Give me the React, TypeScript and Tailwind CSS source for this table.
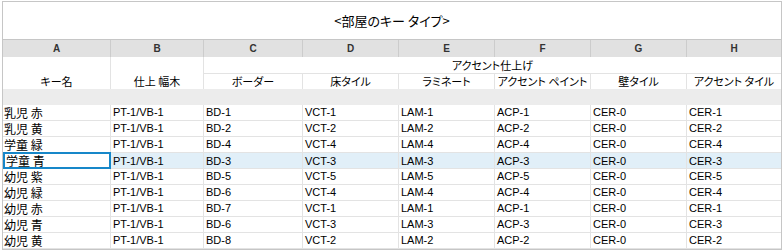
import React from "react";

const COLS = "grid grid-cols-[108px_93px_99px_96px_96px_96px_96px_94px]";
const JP = "[font-family:'Noto_Sans_CJK_JP','Noto_Sans',sans-serif]";
const LAT = "[font-family:'Liberation_Sans',Arial,sans-serif]";

const rows: string[][] = [
  ["乳児 赤", "PT-1/VB-1", "BD-1", "VCT-1", "LAM-1", "ACP-1", "CER-0", "CER-1"],
  ["乳児 黄", "PT-1/VB-1", "BD-2", "VCT-2", "LAM-2", "ACP-2", "CER-0", "CER-2"],
  ["学童 緑", "PT-1/VB-1", "BD-4", "VCT-4", "LAM-4", "ACP-4", "CER-0", "CER-4"],
  ["学童 青", "PT-1/VB-1", "BD-3", "VCT-3", "LAM-3", "ACP-3", "CER-0", "CER-3"],
  ["幼児 紫", "PT-1/VB-1", "BD-5", "VCT-5", "LAM-5", "ACP-5", "CER-0", "CER-5"],
  ["幼児 緑", "PT-1/VB-1", "BD-6", "VCT-4", "LAM-4", "ACP-4", "CER-0", "CER-4"],
  ["幼児 赤", "PT-1/VB-1", "BD-7", "VCT-1", "LAM-1", "ACP-1", "CER-0", "CER-1"],
  ["幼児 青", "PT-1/VB-1", "BD-6", "VCT-3", "LAM-3", "ACP-3", "CER-0", "CER-3"],
  ["幼児 黄", "PT-1/VB-1", "BD-8", "VCT-2", "LAM-2", "ACP-2", "CER-0", "CER-2"],
];

const letters = ["A", "B", "C", "D", "E", "F", "G", "H"];
const subHeads = ["ボーダー", "床タイル", "ラミネート", "アクセント ペイント", "壁タイル", "アクセント タイル"];

export default function App() {
  return (
    <div className="w-[784px] h-[252px] bg-white pl-[2px] pt-[1px]">
      <div className="w-[780px] border border-[#c6c6c6] bg-white text-black">
        <div className={`h-[38px] border-b border-[#c6c6c6] flex items-center justify-center text-[13px] ${JP} [font-feature-settings:'palt'] pt-[1px]`}>
          &lt;部屋のキー タイプ&gt;
        </div>
        <div className={`${COLS} h-[17px] bg-[#e1e1e1]`}>
          {letters.map((l, i) => (
            <div
              key={l}
              className={`flex items-center justify-center text-[10px] font-bold text-[#333] ${LAT} ${i < 7 ? "border-r border-[#cccccc]" : ""}`}
            >
              {l}
            </div>
          ))}
        </div>
        <div className={`${COLS} grid-rows-[17px_15px] text-[11px] ${JP} [font-feature-settings:'palt']`}>
          <div className="row-span-2 border-r border-[#e3e3e3] flex items-end justify-center pb-[0px] leading-[15px]">
            キー名
          </div>
          <div className="row-span-2 border-r border-[#e3e3e3] flex items-end justify-center leading-[15px]">
            仕上 幅木
          </div>
          <div className="col-span-6 border-b border-[#e3e3e3] flex items-center justify-center leading-[16px]">
            アクセント仕上げ
          </div>
          {subHeads.map((h, i) => (
            <div
              key={h}
              className={`flex items-center justify-center leading-[15px] ${i < 5 ? "border-r border-[#e3e3e3]" : ""}`}
            >
              {h}
            </div>
          ))}
        </div>
        <div className="h-[16px] bg-[#ececec]" />
        {rows.map((r, ri) => {
          const sel = ri === 3;
          return (
            <div
              key={ri}
              className={`${COLS} h-[16px] border-b border-[#e3e3e3] ${sel ? "bg-[#e1eff8]" : ""}`}
            >
              {r.map((c, ci) => {
                if (ci === 0) {
                  return sel ? (
                    <div
                      key={ci}
                      className={`relative -mt-[1px] h-[17px] border-2 border-[#1787c9] bg-white flex items-center pl-[1px] text-[12px] ${JP}`}
                    >
                      {c}
                    </div>
                  ) : (
                    <div
                      key={ci}
                      className={`border-r border-[#e3e3e3] flex items-center pl-[1px] text-[12px] leading-[15px] ${JP}`}
                    >
                      {c}
                    </div>
                  );
                }
                return (
                  <div
                    key={ci}
                    className={`flex items-center pl-[2px] text-[11px] leading-[15px] ${LAT} ${ci < 7 ? "border-r border-[#e3e3e3]" : ""}`}
                  >
                    {c}
                  </div>
                );
              })}
            </div>
          );
        })}
      </div>
    </div>
  );
}
